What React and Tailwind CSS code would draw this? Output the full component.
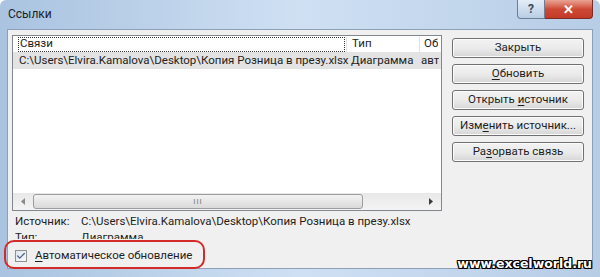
import { Check } from "lucide-react";

const BUTTONS = [
  { pre: "Закрыть", key: "", post: "" },
  { pre: "", key: "О", post: "бновить" },
  { pre: "Открыть ", key: "и", post: "сточник" },
  { pre: "Изм", key: "е", post: "нить источник..." },
  { pre: "Ра", key: "з", post: "орвать связь" },
];

const PATH = "C:\\Users\\Elvira.Kamalova\\Desktop\\Копия Розница в презу.xlsx";

function WinButton({ b }) {
  return (
    <button className="h-[20px] w-[132px] rounded-[3px] border border-[#707070] bg-gradient-to-b from-[#f2f2f2] via-[#ebebeb] to-[#d6d6d6] text-[11.5px] leading-none text-[#1e1e1e] shadow-[inset_0_0_0_1px_#fcfcfc]">
      {b.pre}
      {b.key && <span className="underline underline-offset-2">{b.key}</span>}
      {b.post}
    </button>
  );
}

export default function App() {
  return (
    <div
      className="relative h-[277px] w-[600px] overflow-hidden rounded-t-[6px] bg-gradient-to-r from-[#a9c3e0] via-[#cfe0f3] to-[#b7cde6] text-[#1e1e1e]"
      style={{ fontFamily: "Roboto, 'Noto Sans', sans-serif" }}
    >
      {/* title bar */}
      <div className="flex h-[29px] items-start">
        <span className="pl-[8px] pt-[8px] text-[12px] leading-none">Ссылки</span>
      </div>
      <div className="absolute right-[7px] top-0 flex">
        <div className="flex h-[19px] w-[28px] items-center justify-center rounded-bl-[4px] border border-t-0 border-[#6d7f96] bg-gradient-to-b from-[#e4edf7] to-[#b9cde4] text-[12px] font-bold leading-none text-[#3a4a5c]">
          ?
        </div>
        <div className="flex h-[19px] w-[48px] items-center justify-center rounded-br-[4px] border border-l-0 border-t-0 border-[#7d2b22] bg-gradient-to-b from-[#e8a393] via-[#cf4a36] to-[#c23a28] text-[13px] font-bold leading-none text-white">
          ✕
        </div>
      </div>

      {/* client area */}
      <div className="mx-[7px] flex h-[240px] flex-col border border-[#8da0b8] bg-[#f0f0f0] pl-[4px] pt-[5px]">
        <div className="flex gap-[10px]">
          {/* list view */}
          <div className="flex h-[176px] w-[430px] flex-col border border-[#828790] bg-white text-[11.5px]">
            <div className="flex h-[16px] items-center">
              <div className="ml-[5px] flex h-[15px] w-[327px] items-center border border-dotted border-[#333] pl-[1px]">
                Связи
              </div>
              <div className="ml-[1px] h-[15px] w-px bg-[#e2e2e2]" />
              <div className="w-[72px] pl-[5px]">Тип</div>
              <div className="h-[15px] w-px bg-[#e2e2e2]" />
              <div className="overflow-hidden whitespace-nowrap pl-[4px]">Об</div>
            </div>
            <div className="flex h-[17px] items-center whitespace-nowrap bg-[#e3e3e3]">
              <div className="w-[334px] pl-[6px]">{PATH}</div>
              <div className="w-[74px] pl-[4px]">Диаграмма</div>
              <div className="overflow-hidden">авт</div>
            </div>
            <div className="flex-1" />
            {/* horizontal scrollbar */}
            <div className="flex h-[17px] items-center bg-gradient-to-b from-[#e8e8e8] to-[#f4f4f4]">
              <div className="flex w-[20px] justify-center">
                <svg width="4" height="7" viewBox="0 0 4 7">
                  <path d="M4 0 L0 3.5 L4 7 Z" fill="#8a8a8a" />
                </svg>
              </div>
              <div className="flex h-[15px] w-[330px] items-center justify-center rounded-[3px] border border-[#9d9d9d] bg-gradient-to-b from-[#f3f3f3] to-[#dadada]">
                <span className="text-[8px] leading-none tracking-[1px] text-[#7a7a7a]">III</span>
              </div>
              <div className="flex-1" />
              <div className="flex w-[20px] justify-center">
                <svg width="4" height="7" viewBox="0 0 4 7">
                  <path d="M0 0 L4 3.5 L0 7 Z" fill="#3c3c3c" />
                </svg>
              </div>
            </div>
          </div>

          {/* buttons */}
          <div className="mt-[3px] flex flex-col gap-[6px]">
            {BUTTONS.map((b, i) => (
              <WinButton key={i} b={b} />
            ))}
          </div>
        </div>

        {/* details */}
        <div className="mt-[3px] flex h-[16px] items-center whitespace-nowrap pl-[3px] text-[11.5px]">
          <span className="w-[66px]">Источник:</span>
          <span>{PATH}</span>
        </div>
        <div className="h-[9px] overflow-hidden">
          <div className="flex h-[16px] items-center whitespace-nowrap pl-[3px] text-[11.5px]">
            <span className="w-[66px]">Тип:</span>
            <span>Диаграмма</span>
          </div>
        </div>
        <div className="mt-[8px] flex items-center gap-[8px] pl-[3px] text-[11.5px]">
          <div className="flex h-[12px] w-[12px] items-center justify-center border border-[#8e8f8f] bg-gradient-to-br from-[#dfe6ee] to-[#f7f9fb]">
            <Check size={10} strokeWidth={3} className="text-[#4a5f8a]" />
          </div>
          <span>
            <span className="underline underline-offset-2">А</span>втоматическое обновление
          </span>
        </div>
      </div>

      {/* red annotation */}
      <div className="absolute left-[4px] top-[240px] h-[29px] w-[201px] rounded-[10px] border-2 border-[#d42a2a]" />

      {/* watermark */}
      <div
        className="absolute right-[8px] top-[258px] text-[12.5px] font-bold leading-none text-white [text-shadow:1px_0_0_#000,-1px_0_0_#000,0_1px_0_#000,0_-1px_0_#000,1px_1px_0_#000,-1px_-1px_0_#000,1px_-1px_0_#000,-1px_1px_0_#000]"
        style={{ fontFamily: "'DejaVu Sans', Verdana, sans-serif" }}
      >
        www.excelworld.ru
      </div>
    </div>
  );
}
